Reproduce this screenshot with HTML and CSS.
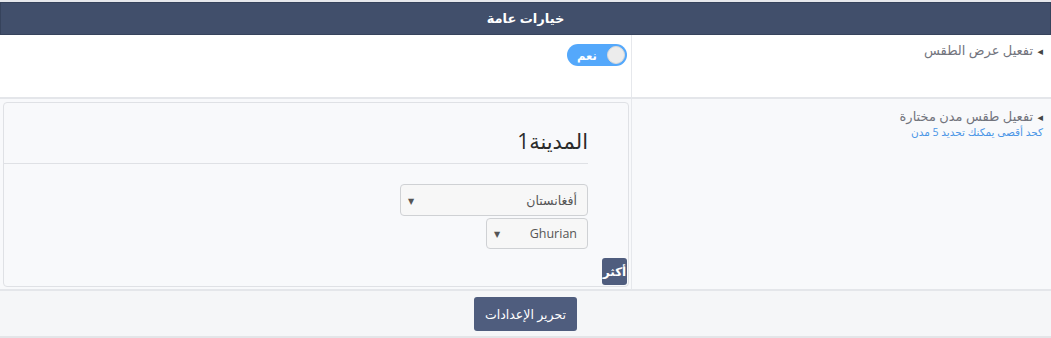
FILE: index.html
```html
<!DOCTYPE html>
<html lang="ar" dir="rtl">
  <head>
    <meta charset="UTF-8">
    <title>خيارات عامة</title>
    <link rel="stylesheet" href="styles.css">
  </head>
  <body>
    <section class="panel">
      <h2 class="panel-title">خيارات عامة</h2>

      <div class="option-row first">
        <div class="option-label">
          <span class="caret">◂</span>
          <span>تفعيل عرض الطقس</span>
        </div>
        <div class="option-control">
          <label class="switch">
            <span class="switch-text">نعم</span>
            <span class="switch-knob"></span>
          </label>
        </div>
      </div>

      <div class="option-row second">
        <div class="option-label">
          <div>
            <span class="caret">◂</span>
            <span>تفعيل طقس مدن مختارة</span>
          </div>
          <div class="hint">كحد أقصى يمكنك تحديد 5 مدن</div>
        </div>
        <div class="option-control">
          <div class="city-card">
            <h3 class="city-name">المدينة1</h3>
            <div class="city-fields">
              <div class="select wide"><span>أفغانستان</span><span class="arrow">▼</span></div>
              <div class="select narrow"><span>Ghurian</span><span class="arrow">▼</span></div>
            </div>
            <div class="card-actions">
              <button class="more-btn">أكثر</button>
            </div>
          </div>
        </div>
      </div>

      <div class="panel-footer">
        <button class="save-btn">تحرير الإعدادات</button>
      </div>
    </section>
  </body>
</html>
```

FILE: styles.css
```css
* {
  box-sizing: border-box;
}
html, body {
  margin: 0;
}
body {
  background-color: #fff;
  font-family: "Open Sans", "DejaVu Sans", sans-serif;
  color: #333;
}
.panel {
  border-top: 2px solid #e6e8ec;
  border-bottom: 3px solid #e3e5e8;
}
.panel-title {
  margin: 0;
  height: 33px;
  line-height: 31px;
  background-color: #414f6b;
  border: 1px solid #36435c;
  color: #fff;
  font-size: 13px;
  font-weight: bold;
  text-align: center;
}
.option-row {
  display: grid;
  grid-template-columns: 420px 1fr;
  border-bottom: 2px solid #e4e6ea;
}
.option-row.first {
  height: 64px;
  background-color: #fff;
}
.option-row.second {
  background-color: #f8f9fb;
}
.option-label {
  border-left: 1px solid #e6e8ec;
  padding: 6px 8px 0 0;
  font-size: 13px;
  color: #72747d;
}
.option-row.second .option-label {
  padding-top: 8px;
}
.caret {
  font-size: 11px;
  color: #444;
  margin-left: 1px;
}
.hint {
  color: #4a95e6;
  font-size: 10.5px;
  margin-top: 0;
}
.option-control {
  padding: 9px 4px 0 0;
}
.option-row.second .option-control {
  padding: 3px 2px 2px 3px;
}
.switch {
  display: flex;
  align-items: center;
  justify-content: space-between;
  width: 60px;
  height: 22px;
  border-radius: 11px;
  background-color: #54a8fb;
  padding: 0 2px 0 10px;
}
.switch-text {
  order: 2;
  color: #fff;
  font-size: 11.5px;
  font-weight: bold;
}
.switch-knob {
  order: 1;
  width: 18px;
  height: 18px;
  border-radius: 50%;
  background-color: #ececec;
  border: 1px solid #d9d9d9;
}
.city-card {
  background-color: #f8f9fb;
  border: 1px solid #dfe1e5;
  border-radius: 4px;
  height: 185px;
  display: flex;
  flex-direction: column;
}
.city-name {
  margin: 0 40px 0 0;
  padding: 24px 0 8px;
  font-size: 21px;
  font-weight: normal;
  color: #2b2b2b;
  border-bottom: 1px solid #dfe1e5;
}
.city-fields {
  display: flex;
  flex-direction: column;
  align-items: flex-start;
  gap: 2px;
  margin: 20px 40px 0 0;
}
.select {
  display: flex;
  justify-content: space-between;
  align-items: center;
  height: 31px;
  padding: 0 10px 0 7px;
  background-color: #f7f7f7;
  border: 1px solid #cfd1d4;
  border-radius: 4px;
  font-size: 12.5px;
  color: #555;
}
.select.wide {
  width: 188px;
  height: 32px;
}
.select.narrow {
  width: 102px;
}
.select .arrow {
  font-size: 8px;
  color: #555;
}
.card-actions {
  margin-top: auto;
  padding: 0 1px 1px 0;
}
.more-btn {
  width: 25px;
  height: 27px;
  padding: 0;
  border: none;
  border-radius: 3px;
  background-color: #4f5d7e;
  color: #fff;
  font-family: inherit;
  font-size: 12px;
  font-weight: bold;
}
.panel-footer {
  background-color: #f5f6f8;
  height: 45px;
  padding-top: 6px;
  text-align: center;
}
.save-btn {
  width: 103px;
  height: 34px;
  border: none;
  border-radius: 3px;
  background-color: #4f5d7e;
  color: #fff;
  font-family: inherit;
  font-size: 12.5px;
}
```
